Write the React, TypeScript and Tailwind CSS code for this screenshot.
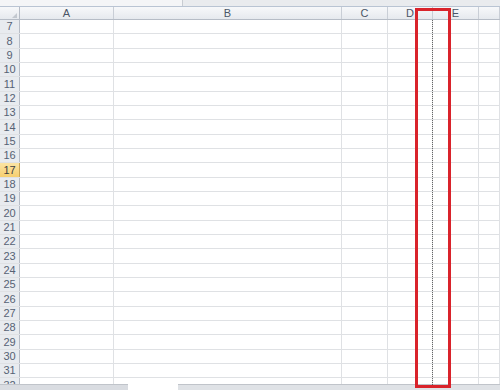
const cols = [
  { label: 'A', w: 'w-[94px]' },
  { label: 'B', w: 'w-[228px]' },
  { label: 'C', w: 'w-[46px]' },
  { label: 'D', w: 'w-[45px]' },
  { label: 'E', w: 'w-[46px]' },
  { label: '', w: 'flex-1' },
];

const rows = Array.from({ length: 26 }, (_, i) => i + 7);

export default function App() {
  return (
    <div className="relative w-[500px] h-[390px] overflow-hidden bg-white flex flex-col font-['Liberation_Sans',Arial,sans-serif]">
      {/* formula bar remnant */}
      <div className="h-[7px] shrink-0 flex border-b border-[#b9c4d3] bg-[#eef0f3]">
        <div className="w-[183px] border-r border-[#c8ccd2] bg-[#f4f5f7]" />
        <div className="flex-1 bg-[#e9ebee]" />
      </div>

      {/* column headers */}
      <div className="h-[13px] shrink-0 flex bg-gradient-to-b from-[#f7f8fa] to-[#e6e9ee] border-b border-[#b6bcc6] text-[11px] leading-[12px] text-[#4a5566]">
        <div className="w-[20px] border-r border-[#b6bcc6] relative">
          <span className="absolute right-[2px] bottom-[1px] w-0 h-0 border-l-[5px] border-l-transparent border-b-[5px] border-b-[#c3c8cf]" />
        </div>
        {cols.map((c, i) => (
          <div key={i} className={`${c.w} border-r border-[#c9ced6] flex justify-center`}>
            {c.label}
          </div>
        ))}
      </div>

      {/* rows */}
      <div className="flex-1 flex flex-col">
        {rows.map((r) => (
          <div key={r} className="h-[14.33px] shrink-0 flex border-b border-[#dfe1e4]">
            <div
              className={`w-[20px] border-r flex items-center justify-center text-[11px] ${
                r === 17
                  ? 'bg-gradient-to-b from-[#fbe4a4] to-[#f6cf6e] text-[#404040] border-[#c9a452]'
                  : 'bg-[#e8ebef] text-[#566274] border-[#b6bcc6]'
              }`}
            >
              {r}
            </div>
            {cols.map((c, i) => (
              <div key={i} className={`${c.w} border-r border-[#dfe1e4]`} />
            ))}
          </div>
        ))}
      </div>

      {/* sheet tab / scroll strip */}
      <div className="absolute left-0 right-0 bottom-0 h-[6px] flex">
        <div className="w-[128px] bg-[#d9dce1] border-t border-[#c0c4ca]" />
        <div className="w-[50px] bg-white" />
        <div className="flex-1 bg-[#dfe2e6] border-t border-[#c0c4ca]" />
      </div>

      {/* page break dotted line */}
      <div className="absolute left-[432px] top-[20px] bottom-[5px] border-l border-dotted border-[#666]" />

      {/* highlight box */}
      <div className="absolute left-[415px] top-[8px] w-[36px] h-[380px] border-[3px] border-[#d9232b]" />
    </div>
  );
}
